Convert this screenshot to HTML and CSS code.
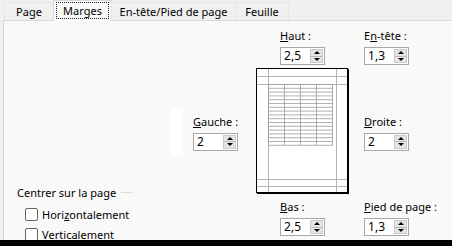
FILE: index.html
```html
<!DOCTYPE html>
<html lang="fr">
<head>
  <meta charset="UTF-8" />
  <title>Mise en page - Marges</title>
  <link rel="stylesheet" href="styles.css">
</head>
<body>

  <div class="dialog">
    <!-- Tabs -->
    <div class="tabs">
      <div class="tab tab-page">Page</div>
      <div class="tab tab-marges active"><span class="focus">Marges</span></div>
      <div class="tab tab-entete">En-tête/Pied de page</div>
      <div class="tab tab-feuille">Feuille</div>
    </div>

    <div class="panel">
      <div class="layout">

        <div class="center-group">
          <div class="legend">Centrer sur la page</div>
          <label class="check"><span class="box"></span>Hori<u>z</u>ontalement</label>
          <label class="check"><span class="box"></span><u>V</u>erticalement</label>
        </div>

        <div class="col col-left">
          <div class="blank"></div>
          <div class="field">
            <div class="label"><u>G</u>auche :</div>
            <div class="spin"><span class="val">2</span><span class="btns"><i class="up"></i><i class="down"></i></span></div>
          </div>
        </div>

        <div class="col col-mid">
          <div class="field">
            <div class="label"><u>H</u>aut :</div>
            <div class="spin"><span class="val">2,5</span><span class="btns"><i class="up"></i><i class="down"></i></span></div>
          </div>

          <svg class="preview" width="93" height="126" viewBox="0 0 93 126">
            <rect x="0" y="0" width="93" height="126" fill="#fff"/>
            <!-- margin guides -->
            <g stroke="#b4b4b4" stroke-width="1">
              <line x1="12.5" y1="1" x2="12.5" y2="124"/>
              <line x1="80.5" y1="1" x2="80.5" y2="124"/>
              <line x1="1" y1="8.5" x2="91" y2="8.5"/>
              <line x1="1" y1="16.5" x2="91" y2="16.5"/>
              <line x1="1" y1="111.5" x2="91" y2="111.5"/>
              <line x1="1" y1="118.5" x2="91" y2="118.5"/>
            </g>
            <!-- sheet grid -->
            <g stroke="#9c9c9c" stroke-width="0.8" id="grid"></g>
            <!-- page border + shadow -->
            <rect x="0.5" y="0.5" width="91" height="124" fill="none" stroke="#000" stroke-width="1"/>
            <rect x="91" y="1" width="2" height="125" fill="#000"/>
            <rect x="1" y="124" width="92" height="2" fill="#000"/>
          </svg>

          <div class="field field-bas">
            <div class="label"><u>B</u>as :</div>
            <div class="spin"><span class="val">2,5</span><span class="btns"><i class="up"></i><i class="down"></i></span></div>
          </div>
        </div>

        <div class="col col-right">
          <div class="field">
            <div class="label">E<u>n</u>-tête :</div>
            <div class="spin"><span class="val">1,3</span><span class="btns"><i class="up"></i><i class="down"></i></span></div>
          </div>
          <div class="field">
            <div class="label"><u>D</u>roite :</div>
            <div class="spin"><span class="val">2</span><span class="btns"><i class="up"></i><i class="down"></i></span></div>
          </div>
          <div class="field">
            <div class="label"><u>P</u>ied de page :</div>
            <div class="spin"><span class="val">1,3</span><span class="btns"><i class="up"></i><i class="down"></i></span></div>
          </div>
        </div>

      </div>
    </div>
  </div>

  <div class="bar"></div>

  <script>
    // draw the little spreadsheet inside the page preview
    const grid = document.getElementById("grid");
    const ns = "http://www.w3.org/2000/svg";

    function addLine(x1, y1, x2, y2) {
      const l = document.createElementNS(ns, "line");
      l.setAttribute("x1", x1);
      l.setAttribute("y1", y1);
      l.setAttribute("x2", x2);
      l.setAttribute("y2", y2);
      grid.appendChild(l);
    }

    const gridTop = 16.5, rows = 16, rowH = 3.8, gridLeft = 12.5, colW = 16;
    const gridBottom = gridTop + rows * rowH;
    for (let i = 0; i <= rows; i++) {
      addLine(gridLeft, gridTop + i * rowH, gridLeft + 4 * colW, gridTop + i * rowH);
    }
    for (let c = 0; c <= 4; c++) {
      addLine(gridLeft + c * colW, gridTop, gridLeft + c * colW, gridBottom);
    }
  </script>

</body>
</html>
```

FILE: styles.css
```css
:root {
  --window: #f0f0f0;
  --panel: #f9f9f9;
  --edge: #d9d9d9;
}

html, body {
  margin: 0;
  padding: 0;
}

body {
  width: 452px;
  height: 246px;
  overflow: hidden;
  background: var(--window);
  font-family: "Noto Sans", "Open Sans", sans-serif;
  font-size: 11px;
  color: #000;
}

.dialog {
  height: 240px;
  overflow: hidden;
  display: flex;
  flex-direction: column;
}

/* tabs */

.tabs {
  display: flex;
  height: 20px;
  padding-left: 4px;
  align-items: flex-end;
  position: relative;
  z-index: 1;
}

.tab {
  height: 18px;
  line-height: 17px;
  text-align: center;
  box-sizing: border-box;
  border: 1px solid #e6e6e6;
  border-bottom: none;
  margin-right: -1px;
}

.tab-page { width: 50px; }
.tab-marges { width: 59px; }
.tab-entete { width: 125px; }
.tab-feuille { width: 54px; }

.tab.active {
  height: 21px;
  margin-bottom: -1px;
  background: var(--panel);
  border-color: var(--edge);
  padding-top: 2px;
  line-height: 15px;
}

.focus {
  display: inline-block;
  padding: 0 6px;
  outline: 1px dotted #222;
  outline-offset: 0;
}

.panel {
  flex: 1;
  margin-left: 3px;
  background: var(--panel);
  border-left: 1px solid var(--edge);
  border-top: 1px solid var(--edge);
}

.layout {
  display: flex;
  padding-top: 7px;
  height: 208px;
}

/* fields */

.col {
  display: flex;
  flex-direction: column;
}

.field .label {
  line-height: 15px;
  margin-bottom: 4px;
  white-space: nowrap;
}

.spin {
  display: flex;
  width: 45px;
  height: 18px;
  box-sizing: border-box;
  border: 1px solid #a8a8a8;
  background: #fff;
}

.spin .val {
  flex: 1;
  padding-left: 3px;
  line-height: 16px;
  font-size: 12px;
}

.spin .btns {
  width: 13px;
  margin: 1px 1px 1px 0;
  display: flex;
  flex-direction: column;
  background: #e5e5e5;
  border: 1px solid #cacaca;
  box-sizing: border-box;
}

.spin .btns i {
  flex: 1;
  display: flex;
  align-items: center;
  justify-content: center;
}

.spin .btns .up {
  border-bottom: 1px solid #b9b9b9;
}

.spin .btns .up::before {
  content: "";
  border-left: 3px solid transparent;
  border-right: 3px solid transparent;
  border-bottom: 3px solid #000;
}

.spin .btns .down::before {
  content: "";
  border-left: 3px solid transparent;
  border-right: 3px solid transparent;
  border-top: 3px solid #000;
}

/* left column */

.col-left {
  flex-direction: row;
  align-items: center;
  margin-right: 18px;
}

.blank {
  width: 13px;
  height: 48px;
  background: #fff;
  margin-right: 10px;
}

/* middle column with preview */

.col-mid {
  width: 93px;
  align-items: center;
  margin-right: 15px;
}

.preview {
  display: block;
  margin-top: 3px;
}

.field-bas {
  margin-top: 5px;
}

/* right column */

.col-right {
  justify-content: space-between;
}

/* centrer sur la page */

.center-group {
  width: 153px;
  padding-left: 13px;
  align-self: flex-end;
  margin-bottom: -8px;
}

.legend {
  display: flex;
  align-items: center;
  line-height: 15px;
  margin-bottom: 4px;
}

.legend::after {
  content: "";
  width: 12px;
  height: 1px;
  background: #dcdcdc;
  margin-left: 5px;
}

.check {
  display: flex;
  align-items: center;
  height: 20px;
  padding-left: 8px;
}

.check .box {
  width: 13px;
  height: 13px;
  box-sizing: border-box;
  border: 1px solid #666;
  border-radius: 2px;
  background: #fff;
  margin-right: 4px;
}

.bar {
  height: 6px;
  background: #000;
}
```
